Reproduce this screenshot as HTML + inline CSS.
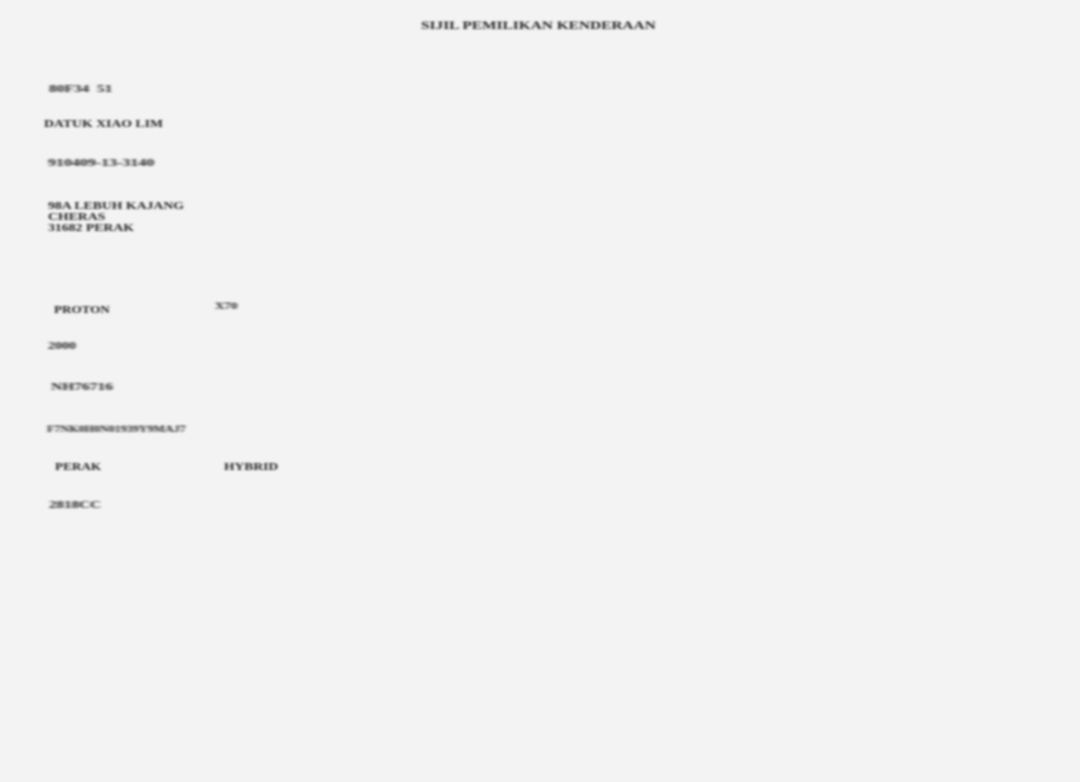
<!DOCTYPE html>
<html><head><meta charset="utf-8"><style>
html,body{margin:0;padding:0;}
body{width:1080px;height:782px;background:#f3f3f3;position:relative;overflow:hidden;font-family:"Liberation Serif",serif;font-weight:bold;color:#222;}
.t{position:absolute;font-size:11px;line-height:12px;white-space:nowrap;filter:blur(1.1px);transform-origin:0 0;}
</style></head><body>
<div class="t" style="left:421px;top:19px;font-size:12px;transform:scaleX(1.28);">SIJIL PEMILIKAN KENDERAAN</div>
<div class="t" style="left:49px;top:83px;transform:scaleX(1.4);">80F34&nbsp; 51</div>
<div class="t" style="left:44px;top:118px;transform:scaleX(1.25);">DATUK XIAO LIM</div>
<div class="t" style="left:48px;top:157px;transform:scaleX(1.45);">910409-13-3140</div>
<div class="t" style="left:48px;top:201px;line-height:11px;transform:scaleX(1.25);">98A LEBUH KAJANG<br>CHERAS<br>31682 PERAK</div>
<div class="t" style="left:54px;top:304px;transform:scaleX(1.19);">PROTON</div>
<div class="t" style="left:215px;top:300px;font-size:9px;transform:scaleX(1.45);">X70</div>
<div class="t" style="left:48px;top:341px;font-size:10px;transform:scaleX(1.4);">2000</div>
<div class="t" style="left:51px;top:382px;font-size:10px;transform:scaleX(1.55);">NH76716</div>
<div class="t" style="left:47px;top:423px;font-size:9px;transform:scaleX(1.34);">F7NK0H0N01939Y9MAJ7</div>
<div class="t" style="left:55px;top:461px;transform:scaleX(1.2);">PERAK</div>
<div class="t" style="left:224px;top:461px;transform:scaleX(1.23);">HYBRID</div>
<div class="t" style="left:49px;top:499px;transform:scaleX(1.37);">2818CC</div>
</body></html>
